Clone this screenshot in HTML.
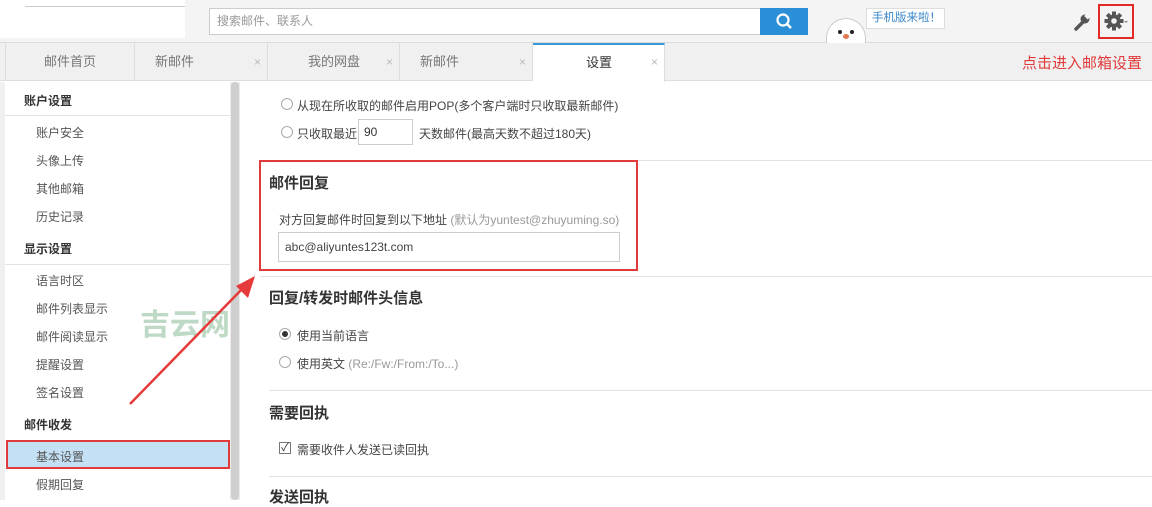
<!DOCTYPE html>
<html><head><meta charset="utf-8"><style>
*{margin:0;padding:0;box-sizing:border-box}
body{width:1152px;height:500px;overflow:hidden;background:#fff;font-family:"Liberation Sans","Noto Sans CJK SC",sans-serif;font-size:12px;color:#333;position:relative}
.a{position:absolute}
.top{left:0;top:0;width:1152px;height:43px;background:#f4f4f4;border-bottom:1px solid #ddd}
.tabs{left:0;top:43px;width:1152px;height:38px;background:#f0f0f0;border-bottom:1px solid #ddd}
.tab{position:absolute;top:0;height:38px;line-height:38px;color:#777;font-size:13px;border-right:1px solid #ddd}
.tab .x{position:absolute;right:6px;top:0;color:#bbb;font-size:12px}
.side .h{position:absolute;left:24px;font-weight:bold;color:#333;font-size:12px}
.side .i{position:absolute;left:36px;color:#555;font-size:12px}
.line{position:absolute;height:1px;background:#e3e3e3}
.rad{position:absolute;width:12px;height:12px;border:1px solid #aaa;border-radius:50%;background:#fff}
.t{position:absolute;font-size:12px;color:#444;white-space:nowrap}
.hd{position:absolute;font-size:15px;font-weight:bold;color:#333}
</style></head><body>
<div class="a top"></div>
<div class="a" style="left:0;top:0;width:185px;height:38px;background:#fff"></div>
<div class="a" style="left:25px;top:6px;width:160px;height:1px;background:#ccc"></div>
<div class="a" style="left:209px;top:8px;width:552px;height:27px;background:#fff;border:1px solid #ccc;color:#999;padding-left:7px;line-height:25px">搜索邮件、联系人</div>
<div class="a" style="left:760px;top:8px;width:48px;height:27px;background:#2b8fd8"><svg width="48" height="27"><circle cx="23" cy="12" r="5.5" fill="none" stroke="#fff" stroke-width="2.2"/><line x1="27" y1="16" x2="31" y2="20" stroke="#fff" stroke-width="2.5"/></svg></div>
<div class="a" style="left:826px;top:18px;width:40px;height:25px;border-radius:20px 20px 0 0;background:#fff;border:1px solid #ccc;border-bottom:none"></div>
<div class="a" style="left:838px;top:30px;width:4px;height:4px;background:#222;border-radius:50%"></div>
<div class="a" style="left:850px;top:30px;width:4px;height:4px;background:#222;border-radius:50%"></div>
<div class="a" style="left:843px;top:34px;width:6px;height:5px;background:#e07b50;border-radius:50%"></div>
<div class="a" style="left:866px;top:8px;width:79px;height:21px;background:#fff;border:1px solid #ddd;color:#3a86c8;line-height:19px;padding-left:5px;white-space:nowrap;font-size:11.5px">手机版来啦！</div>
<svg class="a" style="left:1072px;top:12px" width="20" height="20"><path d="M4 17 L11 10" stroke="#555" stroke-width="3.5" stroke-linecap="round"/><circle cx="13" cy="7" r="4.5" fill="#555"/><rect x="13" y="2" width="5" height="4" fill="#f4f4f4" transform="rotate(45 15 4)"/></svg>
<div class="a" style="left:1098px;top:4px;width:36px;height:35px;border:2px solid #e02a2a"></div>
<svg class="a" style="left:1104px;top:11px" width="26" height="22"><g transform="translate(10 10)" fill="#555"><circle r="6.5"/><g id="tt"><rect x="-2" y="-9.5" width="4" height="19"/></g><rect x="-2" y="-9.5" width="4" height="19" transform="rotate(45)"/><rect x="-2" y="-9.5" width="4" height="19" transform="rotate(90)"/><rect x="-2" y="-9.5" width="4" height="19" transform="rotate(135)"/><circle r="2.8" fill="#f4f4f4"/></g><path d="M20 10 l2 2 l2 -2" fill="#888"/></svg>
<div class="a tabs"></div>
<div class="tab" style="left:5px;top:43px;width:130px;padding-left:38px;border-left:1px solid #ddd">邮件首页</div>
<div class="tab" style="left:135px;top:43px;width:133px;padding-left:20px">新邮件<span class="x">×</span></div>
<div class="tab" style="left:268px;top:43px;width:132px;padding-left:40px">我的网盘<span class="x">×</span></div>
<div class="tab" style="left:400px;top:43px;width:133px;padding-left:20px">新邮件<span class="x">×</span></div>
<div class="tab" style="left:533px;top:43px;width:132px;height:39px;padding-left:53px;background:#fff;color:#333;border-top:2px solid #3a9ad9;line-height:35px">设置<span class="x">×</span></div>
<div class="a" style="left:1022px;top:52px;font-size:15px;color:#e03a3a">点击进入邮箱设置</div>
<div class="a" style="left:0;top:82px;width:5px;height:418px;background:#f0f0f0"></div>
<div class="a side" style="left:0;top:82px;width:230px;height:418px">
<div class="h" style="top:10px">账户设置</div><div class="line" style="left:5px;top:33px;width:225px"></div>
<div class="i" style="top:42px">账户安全</div><div class="i" style="top:70px">头像上传</div><div class="i" style="top:98px">其他邮箱</div><div class="i" style="top:126px">历史记录</div>
<div class="h" style="top:158px">显示设置</div><div class="line" style="left:5px;top:182px;width:225px"></div>
<div class="i" style="top:190px">语言时区</div><div class="i" style="top:218px">邮件列表显示</div><div class="i" style="top:246px">邮件阅读显示</div><div class="i" style="top:274px">提醒设置</div><div class="i" style="top:302px">签名设置</div>
<div class="h" style="top:334px">邮件收发</div>
<div class="a" style="left:6px;top:358px;width:224px;height:29px;background:#c4e0f4;border:2px solid #e03a3a"></div>
<div class="i" style="top:366px">基本设置</div><div class="i" style="top:394px">假期回复</div>
</div>
<div class="a" style="left:230px;top:82px;width:10px;height:418px;background:#ececec"></div>
<div class="a" style="left:231px;top:82px;width:8px;height:418px;background:#cfcfcf;border-radius:4px"></div>
<div class="a" style="left:140px;top:300px;font-size:30px;font-weight:bold;color:#b3d3bb;opacity:.85">吉云网</div>
<svg class="a" style="left:120px;top:270px" width="150" height="140"><line x1="10" y1="134" x2="125" y2="16" stroke="#e63a3a" stroke-width="2.5"/><polygon points="135,6 116,16 128,28" fill="#e63a3a"/></svg>
<div class="rad" style="left:281px;top:98px"></div><div class="t" style="left:297px;top:97px">从现在所收取的邮件启用POP(多个客户端时只收取最新邮件)</div>
<div class="rad" style="left:281px;top:126px"></div><div class="t" style="left:297px;top:125px">只收取最近</div>
<div class="a" style="left:358px;top:119px;width:55px;height:26px;border:1px solid #ccc;padding-left:5px;line-height:24px">90</div>
<div class="t" style="left:419px;top:125px">天数邮件(最高天数不超过180天)</div>
<div class="line" style="left:260px;top:160px;width:892px"></div>
<div class="a" style="left:259px;top:160px;width:379px;height:111px;border:2px solid #e03a3a"></div>
<div class="hd" style="left:269px;top:172px">邮件回复</div>
<div class="t" style="left:279px;top:211px">对方回复邮件时回复到以下地址 <span style="color:#999">(默认为yuntest@zhuyuming.so)</span></div>
<div class="a" style="left:278px;top:232px;width:342px;height:30px;border:1px solid #ccc;padding-left:6px;line-height:28px;color:#444">abc@aliyuntes123t.com</div>
<div class="line" style="left:260px;top:276px;width:892px"></div>
<div class="hd" style="left:269px;top:287px">回复/转发时邮件头信息</div>
<div class="rad" style="left:279px;top:328px"></div><div class="a" style="left:282px;top:331px;width:6px;height:6px;background:#333;border-radius:50%"></div>
<div class="t" style="left:297px;top:327px">使用当前语言</div>
<div class="rad" style="left:279px;top:356px"></div><div class="t" style="left:297px;top:355px">使用英文 <span style="color:#999">(Re:/Fw:/From:/To...)</span></div>
<div class="line" style="left:269px;top:390px;width:883px"></div>
<div class="hd" style="left:269px;top:402px">需要回执</div>
<div class="a" style="left:279px;top:442px;width:12px;height:12px;border:1px solid #777;font-size:11px;line-height:10px;text-align:center">✓</div>
<div class="t" style="left:297px;top:441px">需要收件人发送已读回执</div>
<div class="line" style="left:269px;top:476px;width:883px"></div>
<div class="hd" style="left:269px;top:486px">发送回执</div>
</body></html>
